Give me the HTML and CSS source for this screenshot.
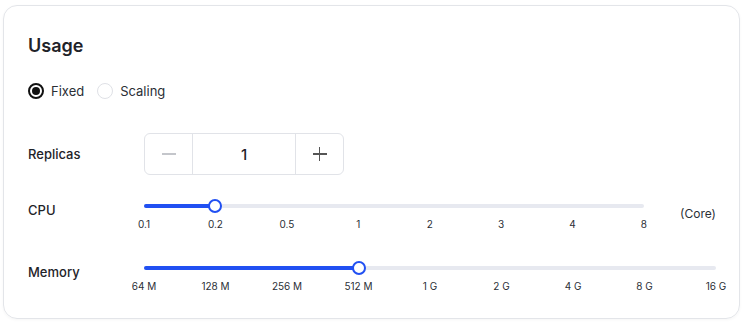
FILE: index.html
```html
<!DOCTYPE html>
<html lang="en">
<head>
    <meta charset="UTF-8">
    <meta name="viewport" content="width=device-width, initial-scale=1.0">
    <title>Usage</title>
    <link rel="stylesheet" href="styles.css">
</head>
<body>

    <div class="card">
        <h2 class="card-title">Usage</h2>

        <!-- Typ nasadenia -->
        <div class="radio-group">
            <label class="radio checked"><span class="radio-dot"></span>Fixed</label>
            <label class="radio"><span class="radio-dot"></span>Scaling</label>
        </div>

        <div class="form-rows">
            <!-- Replicas -->
            <div class="form-row row-center">
                <div class="form-label">Replicas</div>
                <div class="stepper">
                    <button class="stepper-btn disabled"><span class="minus"></span></button>
                    <div class="stepper-value">1</div>
                    <button class="stepper-btn"><span class="minus"></span><span class="plus"></span></button>
                </div>
            </div>

            <!-- CPU -->
            <div class="form-row">
                <div class="form-label">CPU</div>
                <div class="slider-wrap">
                    <div class="slider">
                        <div class="slider-rail">
                            <div class="slider-track" style="width: 14.2857%">
                                <span class="slider-thumb"></span>
                            </div>
                        </div>
                        <div class="slider-marks">
                            <span><i>0.1</i></span>
                            <span><i>0.2</i></span>
                            <span><i>0.5</i></span>
                            <span><i>1</i></span>
                            <span><i>2</i></span>
                            <span><i>3</i></span>
                            <span><i>4</i></span>
                            <span><i>8</i></span>
                        </div>
                    </div>
                    <div class="slider-unit">(Core)</div>
                </div>
            </div>

            <!-- Memory -->
            <div class="form-row">
                <div class="form-label">Memory</div>
                <div class="slider-wrap">
                    <div class="slider">
                        <div class="slider-rail">
                            <div class="slider-track" style="width: 37.5%">
                                <span class="slider-thumb"></span>
                            </div>
                        </div>
                        <div class="slider-marks">
                            <span><i>64 M</i></span>
                            <span><i>128 M</i></span>
                            <span><i>256 M</i></span>
                            <span><i>512 M</i></span>
                            <span><i>1 G</i></span>
                            <span><i>2 G</i></span>
                            <span><i>4 G</i></span>
                            <span><i>8 G</i></span>
                            <span><i>16 G</i></span>
                        </div>
                    </div>
                </div>
            </div>
        </div>
    </div>

</body>
</html>
```

FILE: styles.css
```css
body {
    font-family: Inter, "Noto Sans", sans-serif;
    background-color: #ffffff;
    color: #1f2329;
    margin: 0;
    padding: 5px 4px 4px 3px;
}

.card {
    border: 1px solid #e3e5e9;
    border-radius: 14px;
    box-shadow: 0 1px 3px rgba(0, 0, 0, 0.04);
    padding: 28px 23px 25px 24px;
}

.card-title {
    margin: 0;
    font-size: 18px;
    line-height: 24px;
    font-weight: 600;
}

/* Radio */
.radio-group {
    display: flex;
    gap: 13px;
    margin-top: 25px;
}

.radio {
    display: flex;
    align-items: center;
    gap: 7px;
    font-size: 13px;
    line-height: 16px;
    color: #2b2f36;
}

.radio-dot {
    box-sizing: border-box;
    width: 16px;
    height: 16px;
    border-radius: 50%;
    border: 1px solid #dfe1e6;
    display: flex;
    align-items: center;
    justify-content: center;
}

.radio.checked .radio-dot {
    border: 2px solid #111;
}

.radio.checked .radio-dot::after {
    content: "";
    width: 8px;
    height: 8px;
    border-radius: 50%;
    background-color: #111;
}

/* Riadky formulára */
.form-rows {
    margin-top: 34px;
    display: flex;
    flex-direction: column;
    gap: 24px;
}

.form-row {
    display: grid;
    grid-template-columns: 116px 1fr;
    align-items: start;
}

.form-row.row-center {
    align-items: center;
}

.form-row + .form-row + .form-row {
    margin-top: 6px;
}

.form-label {
    font-size: 13px;
    line-height: 22px;
    font-weight: 500;
    color: #1f2329;
}

/* Stepper */
.stepper {
    display: flex;
    width: 200px;
    height: 42px;
    box-sizing: border-box;
    border: 1px solid #e1e3e8;
    border-radius: 6px;
}

.stepper-btn {
    width: 47px;
    border: none;
    background: none;
    padding: 0;
    position: relative;
    display: flex;
    align-items: center;
    justify-content: center;
    cursor: pointer;
}

.stepper-btn .minus {
    width: 14px;
    height: 1.5px;
    background-color: #555;
}

.stepper-btn .plus {
    position: absolute;
    width: 1.5px;
    height: 14px;
    background-color: #555;
}

.stepper-btn.disabled .minus {
    background-color: #c4c6cb;
}

.stepper-value {
    flex: 1;
    border-left: 1px solid #e1e3e8;
    border-right: 1px solid #e1e3e8;
    display: flex;
    align-items: center;
    justify-content: center;
    font-size: 15px;
    font-weight: 500;
}

/* Slider */
.slider-wrap {
    display: flex;
    align-items: flex-start;
}

.slider {
    flex: 1;
}

.slider-rail {
    height: 4px;
    margin: 5px 0;
    border-radius: 2px;
    background-color: #e7e9f0;
}

.slider-track {
    position: relative;
    height: 100%;
    border-radius: 2px;
    background-color: #2150f2;
}

.slider-thumb {
    position: absolute;
    top: 50%;
    right: -7px;
    box-sizing: border-box;
    width: 14px;
    height: 14px;
    margin-top: -7px;
    border: 2px solid #2150f2;
    border-radius: 50%;
    background-color: #fff;
}

.slider-marks {
    display: flex;
    justify-content: space-between;
    margin-top: 9px;
}

.slider-marks span {
    width: 0;
    display: flex;
    justify-content: center;
}

.slider-marks i {
    font-style: normal;
    font-size: 10px;
    line-height: 14px;
    white-space: nowrap;
    color: #2b2f36;
}

.slider-unit {
    width: 72px;
    text-align: right;
    font-size: 12px;
    line-height: 16px;
    margin-top: 7px;
    color: #2b2f36;
}
```
